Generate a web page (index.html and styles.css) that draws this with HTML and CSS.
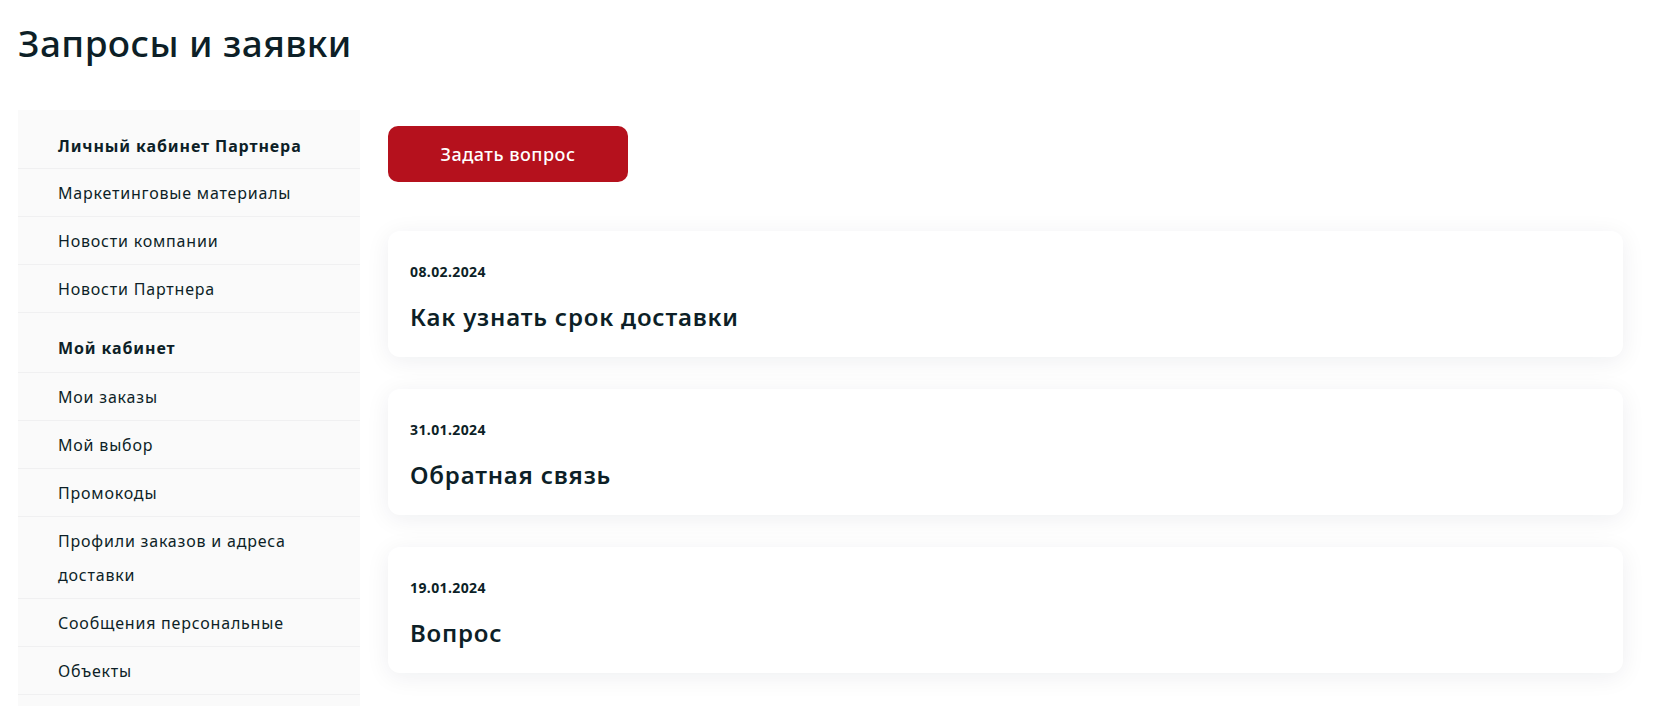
FILE: index.html
```html
<!DOCTYPE html>
<html lang="ru">
<head>
    <meta charset="UTF-8">
    <meta name="viewport" content="width=device-width, initial-scale=1.0">
    <title>Запросы и заявки</title>
    <link rel="stylesheet" href="styles.css">
</head>
<body>
    <div class="page">
        <h1 class="page-title">Запросы и заявки</h1>

        <div class="layout">
            <!-- Меню личного кабинета -->
            <aside class="sidebar">
                <div class="menu-group">
                    <div class="menu-heading">Личный кабинет Партнера</div>
                    <a href="#" class="menu-item">Маркетинговые материалы</a>
                    <a href="#" class="menu-item">Новости компании</a>
                    <a href="#" class="menu-item">Новости Партнера</a>
                </div>
                <div class="menu-group">
                    <div class="menu-heading">Мой кабинет</div>
                    <a href="#" class="menu-item">Мои заказы</a>
                    <a href="#" class="menu-item">Мой выбор</a>
                    <a href="#" class="menu-item">Промокоды</a>
                    <a href="#" class="menu-item">Профили заказов и адреса доставки</a>
                    <a href="#" class="menu-item">Сообщения персональные</a>
                    <a href="#" class="menu-item">Объекты</a>
                </div>
            </aside>

            <!-- Список обращений -->
            <main class="content">
                <button class="btn-ask" type="button">Задать вопрос</button>

                <div class="tickets">
                    <a href="#" class="ticket">
                        <div class="ticket-date">08.02.2024</div>
                        <div class="ticket-title">Как узнать срок доставки</div>
                    </a>
                    <a href="#" class="ticket">
                        <div class="ticket-date">31.01.2024</div>
                        <div class="ticket-title">Обратная связь</div>
                    </a>
                    <a href="#" class="ticket">
                        <div class="ticket-date">19.01.2024</div>
                        <div class="ticket-title">Вопрос</div>
                    </a>
                </div>
            </main>
        </div>
    </div>
</body>
</html>
```

FILE: styles.css
```css
/* Общие стили */
body {
    font-family: "Noto Sans", Arial, sans-serif;
    color: #0d1f27;
    background-color: #fff;
    margin: 0;
    padding: 0;
}

.page {
    padding: 0 39px 0 18px;
}

.page-title {
    font-size: 37px;
    font-weight: 500;
    line-height: 46px;
    letter-spacing: 0.4px;
    margin: 20px 0 44px;
}

.layout {
    display: flex;
    align-items: flex-start;
    gap: 28px;
}

/* Боковое меню */
.sidebar {
    width: 342px;
    flex-shrink: 0;
    background-color: #fafafa;
    padding: 0 0 40px;
}

.menu-heading,
.menu-item {
    display: block;
    padding: 7px 20px 6px 40px;
    line-height: 34px;
    font-size: 16px;
    letter-spacing: 0.8px;
    border-bottom: 1px solid #f0f0f1;
    color: #0d1f27;
    text-decoration: none;
}

.menu-heading {
    font-weight: 700;
    letter-spacing: 0.9px;
    padding-top: 19px;
    padding-bottom: 5px;
}

.menu-group + .menu-group .menu-heading {
    padding-top: 18px;
    padding-bottom: 7px;
}

/* Основная колонка */
.content {
    flex: 1;
    padding-top: 16px;
}

.btn-ask {
    width: 240px;
    height: 56px;
    border: none;
    border-radius: 10px;
    background-color: #b5111d;
    color: #fff;
    font-family: inherit;
    font-size: 18px;
    font-weight: 500;
    letter-spacing: 0.5px;
    cursor: pointer;
}

.tickets {
    display: flex;
    flex-direction: column;
    gap: 32px;
    margin-top: 49px;
}

.ticket {
    display: block;
    height: 126px;
    box-sizing: border-box;
    padding: 31px 22px 0;
    background-color: #fff;
    border-radius: 12px;
    box-shadow: 0 4px 24px rgba(20, 30, 60, 0.07);
    color: #0d1f27;
    text-decoration: none;
}

.ticket-date {
    font-size: 14px;
    font-weight: 700;
    line-height: 20px;
    letter-spacing: 0.4px;
}

.ticket-title {
    font-size: 24px;
    font-weight: 600;
    line-height: 30px;
    letter-spacing: 0.8px;
    margin-top: 20px;
}
```
